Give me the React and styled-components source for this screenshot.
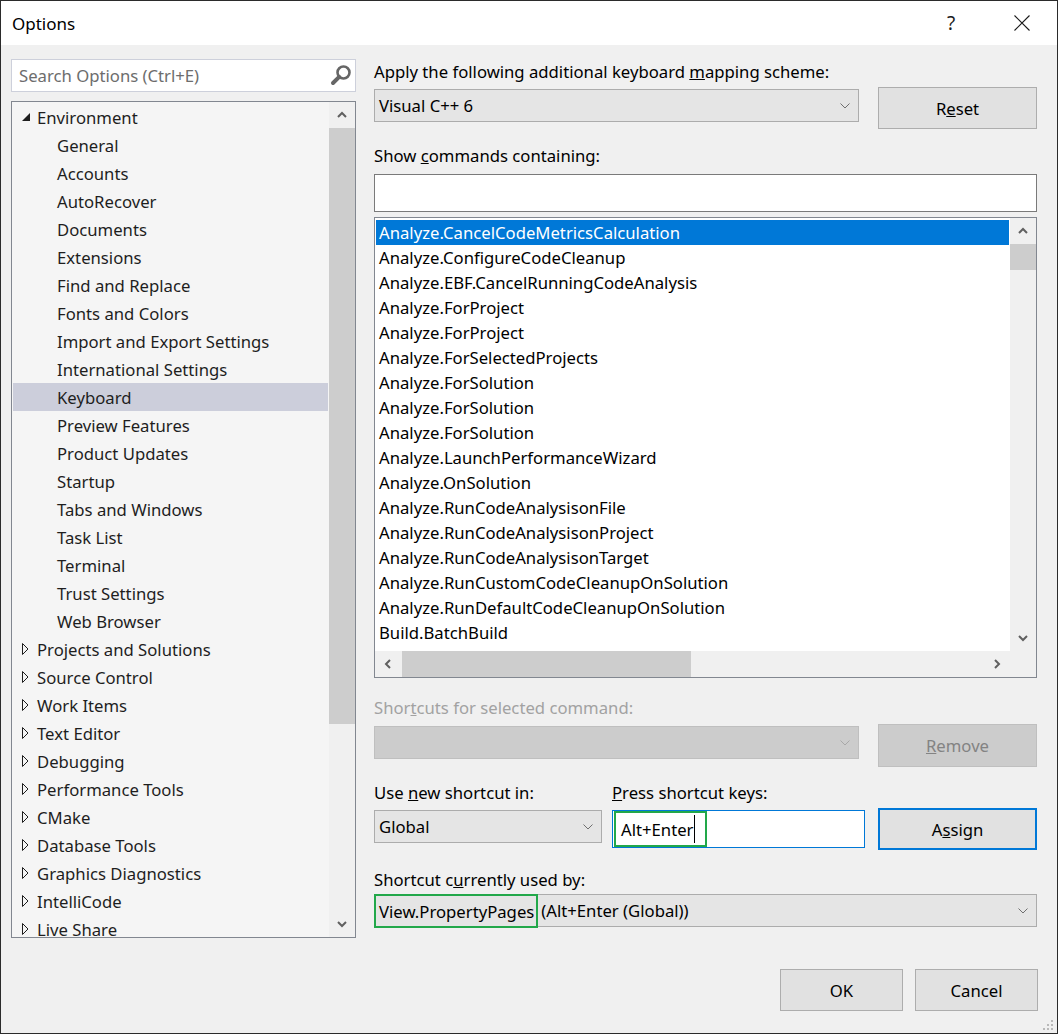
import React from 'react';
import styled, { createGlobalStyle } from 'styled-components';

const GlobalStyle = createGlobalStyle`
  html, body {
    margin: 0;
    padding: 0;
    background: #f0f0f0;
  }
  body {
    font-family: 'Noto Sans', 'Open Sans', sans-serif;
  }
  * {
    box-sizing: border-box;
  }
`;

const Window = styled.div`
  position: relative;
  width: 1058px;
  height: 1034px;
  border: 1px solid #2b2b2b;
  display: flex;
  flex-direction: column;
  background: #f0f0f0;
  color: #000;
  font-size: 16.7px;
  overflow: hidden;
`;

const TitleBar = styled.div`
  height: 44px;
  flex-shrink: 0;
  background: #fff;
  display: flex;
  align-items: center;
  padding: 0 27px 0 11px;
`;

const Title = styled.div`
  font-size: 17px;
  flex: 1;
`;

const HelpGlyph = styled.div`
  width: 20px;
  text-align: center;
  font-size: 19px;
  color: #1a1a1a;
  margin-right: 53px;
`;

const Body = styled.div`
  flex: 1;
  display: flex;
  flex-direction: column;
  padding: 14px 19px 22px 10px;
`;

const Main = styled.div`
  display: flex;
  align-items: flex-start;
`;

const LeftCol = styled.div`
  width: 345px;
  display: flex;
  flex-direction: column;
`;

const SearchBox = styled.div`
  height: 33px;
  border: 1px solid #cdd0db;
  background: #fff;
  display: flex;
  align-items: center;
  padding: 0 2px 0 7px;
  color: #6d6d6d;
`;

const SearchText = styled.span`
  flex: 1;
`;

const Tree = styled.div`
  margin-top: 9px;
  height: 837px;
  border: 1px solid #828790;
  background: #f5f5f5;
  display: flex;
  overflow: hidden;
`;

const TreeRows = styled.div`
  flex: 1;
  padding: 1px 1px 0 1px;
  overflow: hidden;
`;

const TreeRow = styled.div`
  height: 28px;
  display: flex;
  align-items: center;
  white-space: nowrap;
  color: #1e1e1e;
  padding-left: ${p => (p.$child ? 44 : 7)}px;
  background: ${p => (p.$selected ? '#cccedb' : 'transparent')};
`;

const Expander = styled.svg`
  width: 12px;
  height: 12px;
  margin-right: 5px;
  flex-shrink: 0;
`;

const VScroll = styled.div`
  width: 26px;
  background: #f0f0f0;
  display: flex;
  flex-direction: column;
  flex-shrink: 0;
`;

const ArrowCell = styled.div`
  height: 26px;
  width: 100%;
  display: flex;
  align-items: center;
  justify-content: center;
  flex-shrink: 0;
`;

const Thumb = styled.div`
  background: #cdcdcd;
  height: ${p => p.$size}px;
  flex-shrink: 0;
`;

const Spacer = styled.div`
  flex: 1;
`;

const RightCol = styled.div`
  margin-left: 18px;
  width: 663px;
  display: flex;
  flex-direction: column;
`;

const Label = styled.div`
  line-height: 22px;
  height: 22px;
  margin-top: ${p => p.$top}px;
  color: ${p => (p.$disabled ? '#a2a2a2' : '#000')};
  white-space: nowrap;
`;

const LabelRow = styled.div`
  display: flex;
  margin-top: ${p => p.$top}px;
`;

const Row = styled.div`
  display: flex;
  align-items: flex-start;
  margin-top: ${p => p.$top}px;
`;

const Combo = styled.div`
  height: 33px;
  width: ${p => (p.$width ? `${p.$width}px` : 'auto')};
  flex: ${p => (p.$width ? '0 0 auto' : '1')};
  margin-top: ${p => p.$offset || 0}px;
  border: 1px solid ${p => (p.$disabled ? '#bfbfbf' : '#acacac')};
  background: ${p => (p.$disabled ? '#cccccc' : '#e5e5e5')};
  display: flex;
  align-items: center;
  padding-left: ${p => (p.$flush ? 0 : 4)}px;
  padding-right: 8px;
  white-space: nowrap;
`;

const ComboText = styled.span`
  flex: 1;
`;

const Button = styled.div`
  width: 159px;
  height: ${p => p.$h || 42}px;
  margin-left: ${p => p.$gap || 0}px;
  border: ${p => (p.$focused ? '2px solid #0078d7' : `1px solid ${p.$disabled ? '#bfbfbf' : '#adadad'}`)};
  background: ${p => (p.$disabled ? '#cccccc' : '#e1e1e1')};
  color: ${p => (p.$disabled ? '#838383' : '#000')};
  display: flex;
  align-items: center;
  justify-content: center;
  flex-shrink: 0;
`;

const TextBox = styled.div`
  height: 38px;
  border: 1px solid ${p => (p.$focused ? '#0078d7' : '#7a7a7a')};
  background: #fff;
  margin-top: ${p => p.$top || 0}px;
  margin-left: ${p => p.$gap || 0}px;
  width: ${p => (p.$width ? `${p.$width}px` : 'auto')};
  display: flex;
  align-items: center;
`;

const Marked = styled.span`
  display: inline-flex;
  align-items: center;
  border: 2px solid #22a84a;
  align-self: stretch;
`;

const KeyMark = styled(Marked)`
  margin: 0 0 0 1px;
  padding: 0 0 0 5px;
  width: 93px;
`;

const UsedMark = styled(Marked)`
  margin: -1px 3px -2px -1px;
  padding: 0 2px 0 3px;
`;

const Caret = styled.span`
  width: 1px;
  height: 28px;
  background: #000;
  margin-left: 1px;
`;

const ListBox = styled.div`
  margin-top: 5px;
  height: 461px;
  border: 1px solid #828790;
  background: #fff;
  display: grid;
  grid-template-columns: 1fr 26px;
  grid-template-rows: 1fr 26px;
  overflow: hidden;
`;

const ListRows = styled.div`
  padding: 2px 1px 0 1px;
  overflow: hidden;
`;

const ListItem = styled.div`
  height: 25px;
  line-height: 25px;
  padding-left: 3px;
  white-space: nowrap;
  background: ${p => (p.$selected ? '#0078d7' : 'transparent')};
  color: ${p => (p.$selected ? '#fff' : '#000')};
`;

const HScroll = styled.div`
  background: #f0f0f0;
  display: flex;
  align-items: stretch;
`;

const HArrow = styled.div`
  width: 26px;
  display: flex;
  align-items: center;
  justify-content: center;
  flex-shrink: 0;
`;

const HThumb = styled.div`
  background: #cdcdcd;
  width: 289px;
  margin-left: 1px;
`;

const Corner = styled.div`
  background: #f0f0f0;
`;

const Footer = styled.div`
  margin-top: auto;
  display: flex;
  justify-content: flex-end;
  gap: 12px;
`;

const DialogButton = styled.div`
  width: 123px;
  height: 42px;
  border: 1px solid #adadad;
  background: #e1e1e1;
  display: flex;
  align-items: center;
  justify-content: center;
`;

const Grip = styled.svg`
  position: absolute;
  right: 3px;
  bottom: 2px;
`;

const Chevron = ({ dir }) => {
  const pts = {
    up: '1,6 5,2 9,6',
    down: '1,2 5,6 9,2',
    left: '6,1 2,5 6,9',
    right: '2,1 6,5 2,9',
  }[dir];
  const vertical = dir === 'up' || dir === 'down';
  return (
    <svg width={vertical ? 10 : 8} height={vertical ? 8 : 10}>
      <polyline points={pts} fill="none" stroke="#606060" strokeWidth="2" />
    </svg>
  );
};

const DropArrow = ({ color = '#6f6f6f' }) => (
  <svg width="10" height="6">
    <polyline points="0.5,0.5 5,5 9.5,0.5" fill="none" stroke={color} strokeWidth="1" />
  </svg>
);

const treeItems = [
  { label: 'Environment', open: true },
  { label: 'General', child: true },
  { label: 'Accounts', child: true },
  { label: 'AutoRecover', child: true },
  { label: 'Documents', child: true },
  { label: 'Extensions', child: true },
  { label: 'Find and Replace', child: true },
  { label: 'Fonts and Colors', child: true },
  { label: 'Import and Export Settings', child: true },
  { label: 'International Settings', child: true },
  { label: 'Keyboard', child: true, selected: true },
  { label: 'Preview Features', child: true },
  { label: 'Product Updates', child: true },
  { label: 'Startup', child: true },
  { label: 'Tabs and Windows', child: true },
  { label: 'Task List', child: true },
  { label: 'Terminal', child: true },
  { label: 'Trust Settings', child: true },
  { label: 'Web Browser', child: true },
  { label: 'Projects and Solutions' },
  { label: 'Source Control' },
  { label: 'Work Items' },
  { label: 'Text Editor' },
  { label: 'Debugging' },
  { label: 'Performance Tools' },
  { label: 'CMake' },
  { label: 'Database Tools' },
  { label: 'Graphics Diagnostics' },
  { label: 'IntelliCode' },
  { label: 'Live Share' },
];

const commands = [
  'Analyze.CancelCodeMetricsCalculation',
  'Analyze.ConfigureCodeCleanup',
  'Analyze.EBF.CancelRunningCodeAnalysis',
  'Analyze.ForProject',
  'Analyze.ForProject',
  'Analyze.ForSelectedProjects',
  'Analyze.ForSolution',
  'Analyze.ForSolution',
  'Analyze.ForSolution',
  'Analyze.LaunchPerformanceWizard',
  'Analyze.OnSolution',
  'Analyze.RunCodeAnalysisonFile',
  'Analyze.RunCodeAnalysisonProject',
  'Analyze.RunCodeAnalysisonTarget',
  'Analyze.RunCustomCodeCleanupOnSolution',
  'Analyze.RunDefaultCodeCleanupOnSolution',
  'Build.BatchBuild',
];

const TreeExpander = ({ open }) => (
  <Expander viewBox="0 0 12 12">
    {open ? (
      <path d="M10 2 L10 10 L2 10 Z" fill="#1e1e1e" />
    ) : (
      <path d="M2.5 0.5 L8 6 L2.5 11.5 Z" fill="none" stroke="#1e1e1e" strokeWidth="1" />
    )}
  </Expander>
);

export default function App() {
  return (
    <>
      <GlobalStyle />
      <Window>
        <TitleBar>
          <Title>Options</Title>
          <HelpGlyph>?</HelpGlyph>
          <svg width="16" height="16">
            <path d="M0.5 0.5 L15.5 15.5 M15.5 0.5 L0.5 15.5" stroke="#1a1a1a" strokeWidth="1.1" />
          </svg>
        </TitleBar>

        <Body>
          <Main>
            <LeftCol>
              <SearchBox>
                <SearchText>Search Options (Ctrl+E)</SearchText>
                <svg width="24" height="24" viewBox="0 0 24 24">
                  <circle cx="14.5" cy="8.5" r="6" fill="none" stroke="#666" strokeWidth="2.6" />
                  <line x1="10.2" y1="12.8" x2="4" y2="19" stroke="#666" strokeWidth="4" strokeLinecap="round" />
                </svg>
              </SearchBox>

              <Tree>
                <TreeRows>
                  {treeItems.map(item => (
                    <TreeRow key={item.label} $child={item.child} $selected={item.selected}>
                      {!item.child && <TreeExpander open={item.open} />}
                      {item.label}
                    </TreeRow>
                  ))}
                </TreeRows>
                <VScroll>
                  <ArrowCell>
                    <Chevron dir="up" />
                  </ArrowCell>
                  <Thumb $size={596} />
                  <Spacer />
                  <ArrowCell>
                    <Chevron dir="down" />
                  </ArrowCell>
                </VScroll>
              </Tree>
            </LeftCol>

            <RightCol>
              <Label $top={2}>
                Apply the following additional keyboard <u>m</u>apping scheme:
              </Label>
              <Row $top={4}>
                <Combo $offset={2}>
                  <ComboText>Visual C++ 6</ComboText>
                  <DropArrow />
                </Combo>
                <Button $gap={19}>
                  <span>
                    R<u>e</u>set
                  </span>
                </Button>
              </Row>

              <Label $top={16}>
                Show <u>c</u>ommands containing:
              </Label>
              <TextBox $top={7} />

              <ListBox>
                <ListRows>
                  {commands.map((cmd, i) => (
                    <ListItem key={i} $selected={i === 0}>
                      {cmd}
                    </ListItem>
                  ))}
                </ListRows>
                <VScroll>
                  <ArrowCell>
                    <Chevron dir="up" />
                  </ArrowCell>
                  <Thumb $size={26} />
                  <Spacer />
                  <ArrowCell>
                    <Chevron dir="down" />
                  </ArrowCell>
                </VScroll>
                <HScroll>
                  <HArrow>
                    <Chevron dir="left" />
                  </HArrow>
                  <HThumb />
                  <Spacer />
                  <HArrow>
                    <Chevron dir="right" />
                  </HArrow>
                </HScroll>
                <Corner />
              </ListBox>

              <Label $top={19} $disabled>
                Shor<u>t</u>cuts for selected command:
              </Label>
              <Row $top={5}>
                <Combo $offset={2} $disabled>
                  <ComboText />
                  <DropArrow color="#a8a8a8" />
                </Combo>
                <Button $gap={19} $h={43} $disabled>
                  <span>
                    <u>R</u>emove
                  </span>
                </Button>
              </Row>

              <LabelRow $top={15}>
                <Label $top={0} style={{ width: 238 }}>
                  Use <u>n</u>ew shortcut in:
                </Label>
                <Label $top={0}>
                  <u>P</u>ress shortcut keys:
                </Label>
              </LabelRow>
              <Row $top={4}>
                <Combo $offset={2} $width={228}>
                  <ComboText>Global</ComboText>
                  <DropArrow />
                </Combo>
                <TextBox $top={2} $gap={10} $width={253} $focused>
                  <KeyMark>
                    Alt+Enter
                    <Caret />
                  </KeyMark>
                </TextBox>
                <Button $gap={13} $focused>
                  <span>
                    A<u>s</u>sign
                  </span>
                </Button>
              </Row>

              <Label $top={19}>
                Shortcut c<u>u</u>rrently used by:
              </Label>
              <Row $top={3}>
                <Combo $flush>
                  <UsedMark>View.PropertyPages</UsedMark>
                  <ComboText>(Alt+Enter (Global))</ComboText>
                  <DropArrow />
                </Combo>
              </Row>
            </RightCol>
          </Main>

          <Footer>
            <DialogButton>OK</DialogButton>
            <DialogButton>Cancel</DialogButton>
          </Footer>
        </Body>

        <Grip width="12" height="12" viewBox="0 0 12 12">
          {[
            [9, 1],
            [5, 5],
            [9, 5],
            [1, 9],
            [5, 9],
            [9, 9],
          ].map(([x, y]) => (
            <rect key={`${x}-${y}`} x={x} y={y} width="2" height="2" fill="#b9b9b9" />
          ))}
        </Grip>
      </Window>
    </>
  );
}
